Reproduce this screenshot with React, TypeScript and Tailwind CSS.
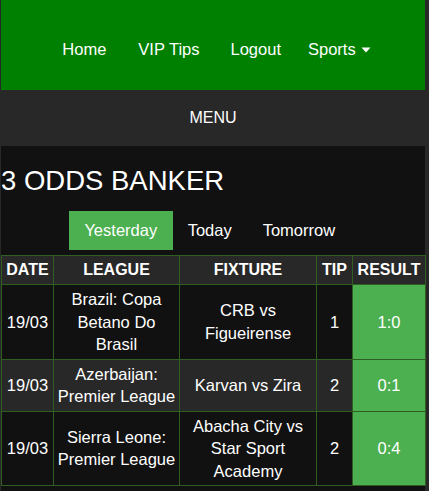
import React from "react";

const rows = [
  { date: "19/03", league: "Brazil: Copa Betano Do Brasil", fixture: "CRB vs Figueirense", tip: "1", result: "1:0" },
  { date: "19/03", league: "Azerbaijan: Premier League", fixture: "Karvan vs Zira", tip: "2", result: "0:1" },
  { date: "19/03", league: "Sierra Leone: Premier League", fixture: "Abacha City vs Star Sport Academy", tip: "2", result: "0:4" },
];

export default function App() {
  return (
    <div
      className="min-h-[491px] w-full bg-[#282828] pl-[1px] pr-[4px] text-white"
      style={{ fontFamily: '"Liberation Sans", Arial, sans-serif' }}
    >
      <div className="h-[90px] bg-[#008000] flex items-center justify-center pt-[9px] pl-[7px] text-[16.5px] leading-[22.5px]">
        <a className="block">Home</a>
        <a className="block ml-[32px]">VIP Tips</a>
        <a className="block ml-[31px]">Logout</a>
        <a className="flex items-center ml-[27px]">
          Sports
          <svg width="10" height="6" viewBox="0 0 10 6" className="ml-[5px] mt-[1px]">
            <path d="M0.5 0.5 H9.5 L5 5.5 Z" fill="#ffffff" />
          </svg>
        </a>
      </div>
      <div className="h-[56px] flex items-center justify-center text-[16px] leading-[24px]">MENU</div>
      <div className="bg-[#111111] pb-[20px]">
        <h1 className="pt-[18px] text-[27.5px] leading-[33px] font-normal">3 ODDS BANKER</h1>
        <div className="mt-[14px] flex justify-center pr-[6px] text-[16.5px] leading-[22.5px]">
          <span className="bg-[#4caf50] px-[15.5px] py-[8px]">Yesterday</span>
          <span className="px-[15px] py-[8px]">Today</span>
          <span className="px-[16px] py-[8px]">Tomorrow</span>
        </div>
        <table className="mt-[5px] w-[424px] table-fixed border-collapse text-center text-[16.5px] leading-[22.5px]">
          <colgroup>
            <col className="w-[52px]" />
            <col className="w-[126px]" />
            <col className="w-[137px]" />
            <col className="w-[36px]" />
            <col className="w-[73px]" />
          </colgroup>
          <thead>
            <tr className="bg-[#282828] text-[16px] font-bold">
              <th className="border border-[#2f5d22] px-0 py-[3px]">DATE</th>
              <th className="border border-[#2f5d22] px-0 py-[3px]">LEAGUE</th>
              <th className="border border-[#2f5d22] px-0 py-[3px]">FIXTURE</th>
              <th className="border border-[#2f5d22] px-0 py-[3px]">TIP</th>
              <th className="border border-[#2f5d22] px-0 py-[3px]">RESULT</th>
            </tr>
          </thead>
          <tbody>
            {rows.map((r, i) => (
              <tr key={i} className={i % 2 === 1 ? "bg-[#282828]" : "bg-[#111111]"}>
                <td className="border border-[#2f5d22] px-0 py-[3px]">{r.date}</td>
                <td className="border border-[#2f5d22] px-[3px] py-[3px]">{r.league}</td>
                <td className="border border-[#2f5d22] px-[3px] py-[3px]">{r.fixture}</td>
                <td className="border border-[#2f5d22] px-0 py-[3px]">{r.tip}</td>
                <td className="border border-[#2f5d22] bg-[#4caf50] px-0 py-[3px]">{r.result}</td>
              </tr>
            ))}
          </tbody>
        </table>
      </div>
    </div>
  );
}
